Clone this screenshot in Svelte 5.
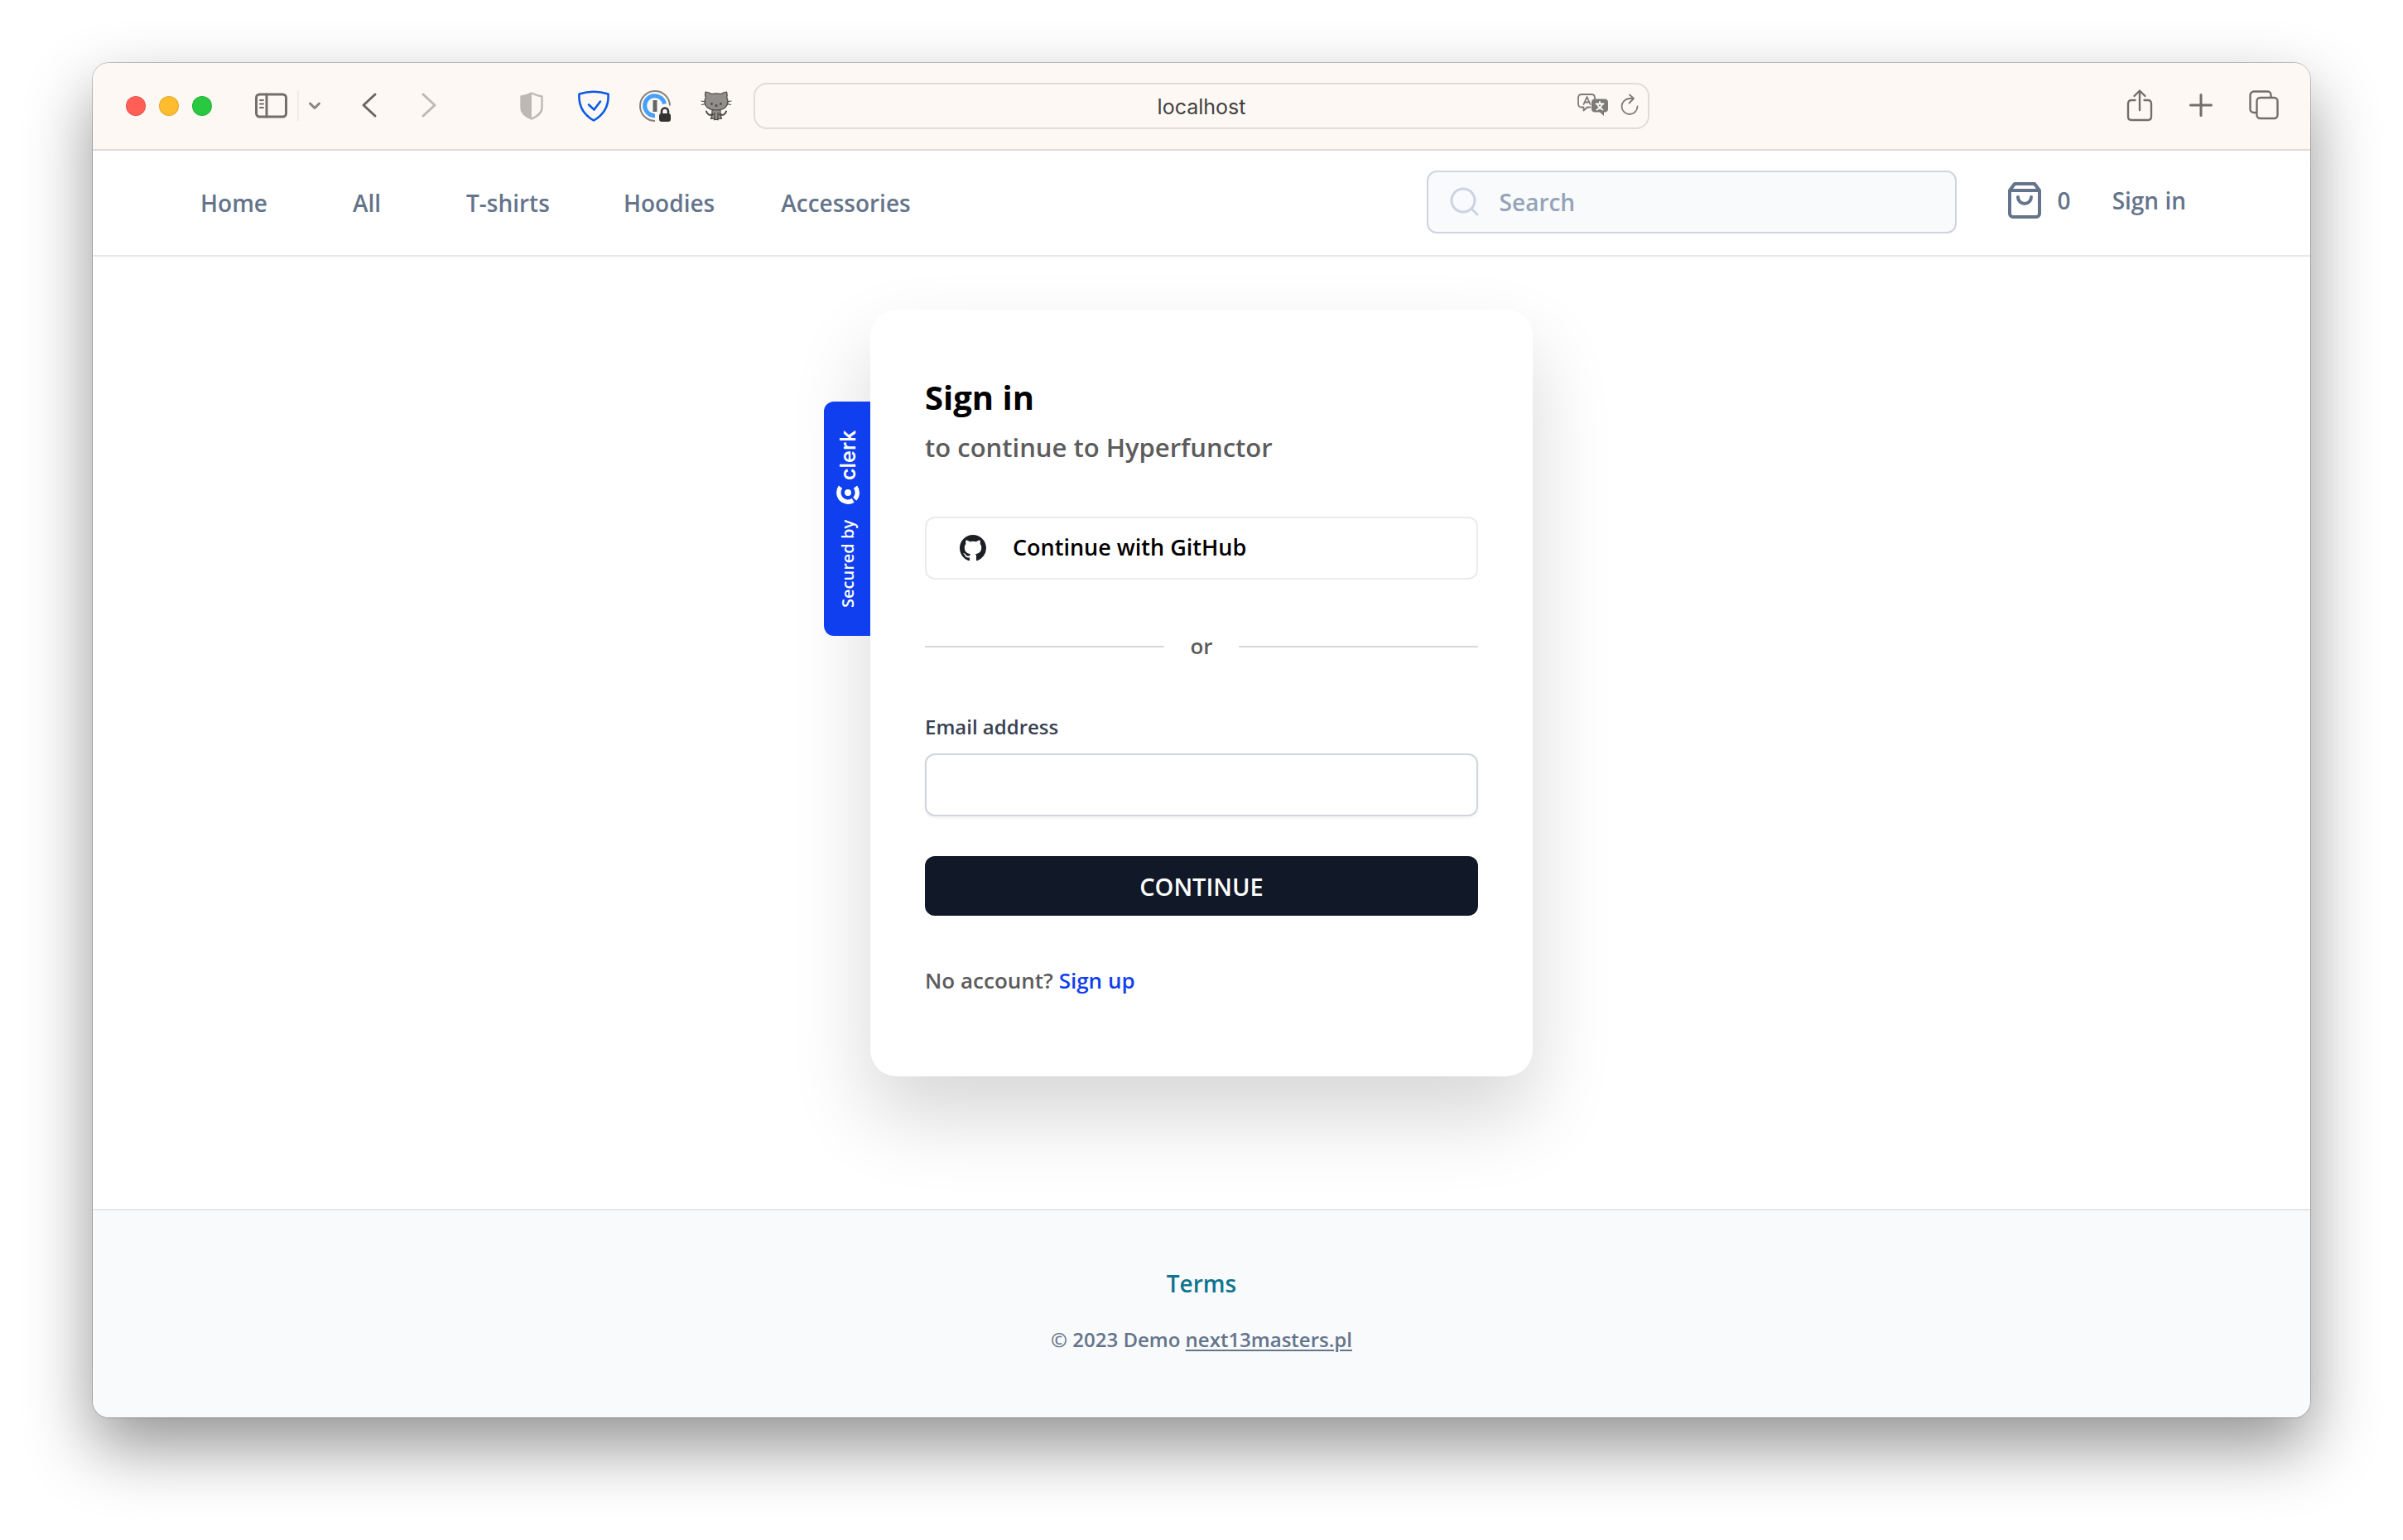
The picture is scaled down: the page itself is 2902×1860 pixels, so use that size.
<script>
  const navLinks = ['Home', 'All', 'T-shirts', 'Hoodies', 'Accessories'];
  let search = $state('');
  let email = $state('');
</script>

<div class="desktop">
  <div class="window">
    <div class="toolbar">
      <div class="tools left">
        <div class="lights">
          <button class="light red" aria-label="Close"></button>
          <button class="light yellow" aria-label="Minimise"></button>
          <button class="light green" aria-label="Zoom"></button>
        </div>
        <div class="sidebar-tools">
          <button class="icon" aria-label="Show sidebar">
            <svg width="40" height="32" viewBox="0 0 40 32" fill="none" stroke="#746e6a" stroke-width="3" stroke-linecap="round">
              <rect x="1.5" y="2" width="36" height="27" rx="4" />
              <path d="M14 2v27" />
              <path d="M6 9h4M6 13.500h4M6 18h4" stroke-width="2" />
            </svg>
          </button>
          <span class="divider"></span>
          <button class="icon" aria-label="Tab groups">
            <svg width="16" height="12" viewBox="0 0 16 12" fill="none" stroke="#8a8581" stroke-width="3" stroke-linecap="round" stroke-linejoin="round"><path d="M2.500 3 8 8.500 13.500 3" /></svg>
          </button>
        </div>
        <div class="history">
          <button class="icon" aria-label="Back">
            <svg width="20" height="32" viewBox="0 0 20 32" fill="none" stroke="#6b6561" stroke-width="3" stroke-linecap="round" stroke-linejoin="round"><path d="M17 3 3 16l14 13" /></svg>
          </button>
          <button class="icon" aria-label="Forward">
            <svg width="20" height="32" viewBox="0 0 20 32" fill="none" stroke="#bdb8b4" stroke-width="3" stroke-linecap="round" stroke-linejoin="round"><path d="m3 3 14 13L3 29" /></svg>
          </button>
        </div>
        <div class="extensions">
          <button class="icon privacy" aria-label="Privacy report">
            <svg width="28" height="34" viewBox="0 0 28 34"><path d="M14 1.500c4 2 8 3.200 12.500 4V19c0 7-6 10.500-12.500 13.500C7.500 29.500 1.500 26 1.500 19V5.500C6 4.700 10 3.500 14 1.500Z" fill="none" stroke="#bdb8b4" stroke-width="2.400" stroke-linejoin="round" /><path d="M14 1.500v31C7.500 29.500 1.500 26 1.500 19V5.500C6 4.700 10 3.500 14 1.500Z" fill="#bdb8b4" /></svg>
          </button>
          <button class="icon" aria-label="Ad blocker">
            <svg width="38" height="38" viewBox="0 0 38 38" fill="none" stroke="#0a5ae6" stroke-width="2.600" stroke-linecap="round" stroke-linejoin="round"><path d="M1.500 4.500C13 .8 25 .8 36.500 4.500 37.500 19 31 29.500 19 36.500 7 29.500.5 19 1.500 4.500Z" /><path d="m13 17.500 6.500 6L27 13.500" /></svg>
          </button>
          <button class="icon" aria-label="Password manager">
            <svg width="38" height="38" viewBox="0 0 38 38" fill="none"><path d="M37 18.500A18 18 0 1 0 19 37" stroke="#85817e" stroke-width="2" /><path d="M30.500 16.500A12 12 0 1 0 19 30.700" stroke="#46a0fb" stroke-width="5" /><path d="M16.500 12h5v14h-5z" fill="#666" /><rect x="24" y="28" width="14" height="10" rx="3" fill="#333" /><path d="M27 29v-3.500a4 4 0 0 1 8 0V29" stroke="#333" stroke-width="2.600" /></svg>
          </button>
          <button class="icon" aria-label="Octotree">
            <svg width="38" height="38" viewBox="0 0 38 38" fill="#918e8b" stroke="#4a4846" stroke-width="1.200" stroke-linejoin="round" stroke-linecap="round">
              <path d="M14 23.500c0 4 .5 7-1.500 11h3c1 0 1.500 1 3.500 1s2.500-1 3.500-1h3c-2-4-1.500-7-1.500-11Z" />
              <path d="M6 2c3 0 5.500 1 7 2.500 4-.8 8-.8 12 0C26.500 3 29 2 31.500 2c.8 2.500.8 5 .2 7C33.500 12 33.500 15 32 18c-2 4-6.500 6-13 6S8 22 6 18c-1.500-3-1.500-6 .3-9C5.500 7 5.300 4.500 6 2Z" />
              <path d="M15 29c-4 2-7 0-8-3.500M23 29c4 2 7 0 8-3.500" fill="none" stroke-width="2" />
              <path d="M17 27v9M21 27v9M1 13l5 1M1.500 17.500l4.500-1M37 13l-5 1M36.500 17.500l-4.500-1" fill="none" />
              <circle cx="13.500" cy="16.500" r=".8" /><circle cx="24.500" cy="16.500" r=".8" /><circle cx="19" cy="18.500" r="1" fill="none" />
            </svg>
          </button>
        </div>
      </div>

      <div class="address">
        <span class="host">localhost</span>
        <div class="address-tools">
          <button class="icon" aria-label="Translate">
            <svg width="38" height="28" viewBox="0 0 38 28" fill="none" stroke="#7d7a77" stroke-width="1.800" stroke-linejoin="round" stroke-linecap="round">
              <path d="M15.500 16.500H12l-4.500 4v-4H5c-2.500 0-4-1.500-4-4V5c0-2.500 1.500-4 4-4h12c2.500 0 4 1.500 4 4v1" />
              <path d="M7.500 13 11.500 4l4 9M9 10.500h5" />
              <path d="M21 6.500h12c2.500 0 4 1.500 4 4v8c0 2.500-1.500 4-4 4h-1V27l-5-4.500h-6c-2.500 0-4-1.500-4-4v-8c0-2.500 1.500-4 4-4Z" fill="#7d7a77" stroke="none" />
              <path d="M22.500 12.500h9M27 10v2.500M30 12.500c-1 3.500-3.500 5.500-6.500 7M24 12.500c1 3.500 3.500 5.500 6.500 7" stroke="#fff" />
            </svg>
          </button>
          <button class="icon" aria-label="Reload">
            <svg width="22" height="28" viewBox="0 0 22 28" fill="none" stroke="#7d7a77" stroke-width="1.800" stroke-linecap="round" stroke-linejoin="round"><path d="M20.500 15.500A9.500 9.500 0 1 1 11 6h5M11 1.500l5 4.500-5.500 5.500" /></svg>
          </button>
        </div>
      </div>

      <div class="tools right">
        <button class="icon" aria-label="Share">
          <svg width="32" height="40" viewBox="0 0 32 40" fill="none" stroke="#746e6a" stroke-width="2.400" stroke-linecap="round" stroke-linejoin="round"><path d="M10.500 14H6c-2.500 0-4 1.500-4 4v16c0 2.500 1.500 4 4 4h20c2.500 0 4-1.500 4-4V18c0-2.500-1.500-4-4-4h-4.500M16 26V3M9.500 9 16 2.500 22.500 9" /></svg>
        </button>
        <button class="icon" aria-label="New tab">
          <svg width="28" height="28" viewBox="0 0 28 28" fill="none" stroke="#746e6a" stroke-width="3" stroke-linecap="round"><path d="M14 1.500v25M1.500 14h25" /></svg>
        </button>
        <button class="icon" aria-label="Tab overview">
          <svg width="36" height="36" viewBox="0 0 36 36" fill="none" stroke="#746e6a" stroke-width="2.400" stroke-linejoin="round"><rect x="9.500" y="9" width="25" height="25" rx="4" /><path d="M9.500 27H6c-2.500 0-4.500-1.500-4.500-4V6c0-2.500 2-4.500 4.500-4.500h16.500c2.500 0 4 2 4 4.500v3" /></svg>
        </button>
      </div>
    </div>

    <header class="site-header">
      <nav>
        {#each navLinks as link}
          <a href="#{link.toLowerCase()}">{link}</a>
        {/each}
      </nav>
      <div class="actions">
        <label class="search">
          <svg width="36" height="36" viewBox="0 0 36 36" fill="none" stroke="#cbd5e1" stroke-width="3" stroke-linecap="round"><circle cx="16" cy="16" r="14" /><path d="m26 26 7 7" /></svg>
          <input type="search" placeholder="Search" aria-label="Search" bind:value={search} />
        </label>
        <a class="cart" href="#cart" aria-label="Cart, 0 items">
          <svg width="48" height="48" viewBox="0 0 24 24" fill="none" stroke="#64748b" stroke-width="2" stroke-linecap="round" stroke-linejoin="round"><path d="M6 2 3 6v14a2 2 0 0 0 2 2h14a2 2 0 0 0 2-2V6l-3-4ZM3 6h18M16 10a4 4 0 0 1-8 0" /></svg>
          <span>0</span>
        </a>
        <a class="login" href="#signin">Sign in</a>
      </div>
    </header>

    <main>
      <section class="card">
        <a class="badge" href="#clerk">
          <span class="secured">Secured by</span>
          <svg width="28" height="24" viewBox="0 0 28 24" fill="none" stroke="#fff" stroke-width="5.400"><circle cx="14" cy="9" r="4" fill="#fff" stroke="none" /><path d="M5 2.200A11.300 11.300 0 0 0 20.200 18.400" /><path d="M23 2.200A11.300 11.300 0 0 1 22.200 16.800" /></svg>
          <span class="clerk">clerk</span>
        </a>
        <h1>Sign in</h1>
        <p class="subtitle">to continue to Hyperfunctor</p>
        <button class="github">
          <svg width="32" height="32" viewBox="0 0 16 16" fill="#1b1f24"><path d="M8 0C3.580 0 0 3.580 0 8c0 3.540 2.290 6.530 5.470 7.590.4.070.55-.17.55-.38 0-.19-.01-.82-.01-1.490-2.010.37-2.530-.49-2.690-.94-.09-.23-.48-.94-.82-1.130-.28-.15-.68-.52-.01-.53.63-.01 1.080.58 1.230.82.72 1.210 1.870.87 2.330.66.07-.52.28-.87.51-1.070-1.780-.2-3.640-.89-3.640-3.950 0-.87.31-1.590.82-2.150-.08-.2-.36-1.020.08-2.120 0 0 .67-.21 2.200.82.64-.18 1.320-.27 2-.27s1.360.09 2 .27c1.530-1.040 2.200-.82 2.200-.82.44 1.100.16 1.920.08 2.120.51.56.82 1.270.82 2.150 0 3.070-1.870 3.750-3.650 3.950.29.25.54.73.54 1.480 0 1.070-.01 1.930-.01 2.200 0 .21.15.46.55.38A8.010 8.010 0 0 0 16 8c0-4.420-3.580-8-8-8Z" /></svg>
          <span>Continue with GitHub</span>
        </button>
        <div class="or"><span>or</span></div>
        <form onsubmit={(e) => e.preventDefault()}>
          <label for="email">Email address</label>
          <input id="email" type="email" bind:value={email} />
          <button class="continue" type="submit">CONTINUE</button>
        </form>
        <p class="signup">No account? <a href="#signup">Sign up</a></p>
      </section>
    </main>

    <footer>
      <a class="terms" href="#terms">Terms</a>
      <p>© 2023 Demo <a href="#site">next13masters.pl</a></p>
    </footer>
  </div>
</div>

<style>
  :global(body) {
    margin: 0;
    background: #fff;
  }
  :global(*) {
    box-sizing: border-box;
  }
  .desktop {
    display: flex;
    min-height: 100vh;
    padding: 76px 112px 148px;
    font-family: 'Open Sans', 'Noto Sans', sans-serif;
    font-weight: 600;
  }
  .window {
    display: flex;
    flex: 1;
    flex-direction: column;
    overflow: hidden;
    border-radius: 20px;
    background: #fff;
    box-shadow: 0 0 0 1px rgb(0 0 0 / 22%), 0 36px 80px rgb(0 0 0 / 42%);
  }
  a {
    color: inherit;
    text-decoration: none;
  }
  button {
    padding: 0;
    border: 0;
    background: none;
    font: inherit;
    cursor: pointer;
  }
  svg {
    display: block;
    flex: none;
  }
  p,
  h1 {
    margin: 0;
  }

  .toolbar {
    display: grid;
    grid-template-columns: 1fr minmax(0, 1082px) 1fr;
    align-items: center;
    height: 106px;
    border-bottom: 2px solid #dedbd9;
    background: #fdf8f4;
  }
  .tools,
  .lights,
  .sidebar-tools,
  .history,
  .extensions,
  .address-tools {
    display: flex;
    align-items: center;
  }
  .left {
    padding: 0 26px 0 40px;
  }
  .lights {
    gap: 16px;
  }
  .light {
    width: 24px;
    height: 24px;
    border: 1px solid rgb(0 0 0 / 10%);
    border-radius: 50%;
  }
  .red {
    background: #ff5f57;
  }
  .yellow {
    background: #febc2e;
  }
  .green {
    background: #28c840;
  }
  .sidebar-tools {
    gap: 11px;
    margin-left: 52px;
  }
  .divider {
    width: 2px;
    height: 36px;
    background: #f0ebe7;
  }
  .history {
    gap: 52px;
    margin-left: 48px;
    padding-bottom: 2px;
  }
  .extensions {
    gap: 36px;
    margin-left: auto;
  }
  .privacy {
    margin-right: 6px;
  }
  .address {
    display: grid;
    grid-template-columns: 1fr auto 1fr;
    align-items: center;
    height: 56px;
    padding: 0 11px;
    border: 2px solid #e2dcd8;
    border-radius: 16px;
  }
  .host {
    grid-column: 2;
    padding-top: 2px;
    color: #444240;
    font: 400 25px/32px Inter, sans-serif;
  }
  .address-tools {
    gap: 14px;
    justify-self: end;
    padding-bottom: 2px;
  }
  .right {
    justify-content: flex-end;
    gap: 44px;
    padding: 0 38px 2px 0;
  }

  .site-header {
    display: flex;
    align-items: center;
    justify-content: space-between;
    height: 128px;
    padding: 0 150px 0 130px;
    border-bottom: 2px solid #e5e7eb;
    color: #64748b;
    font-size: 28px;
    line-height: 40px;
  }
  nav {
    display: flex;
    gap: 80px;
  }
  nav a {
    min-width: 80px;
    text-align: center;
  }
  nav a:nth-child(n + 3) {
    min-width: 110px;
    text-align: left;
  }
  .actions {
    display: flex;
    align-items: center;
    padding-bottom: 2px;
  }
  .search {
    display: flex;
    align-items: center;
    gap: 24px;
    width: 640px;
    height: 76px;
    padding: 0 26px;
    border: 2px solid #cfd4de;
    border-radius: 12px;
    background: #f8fafc;
  }
  .search input {
    flex: 1;
    min-width: 0;
    padding: 0;
    border: 0;
    outline: 0;
    background: none;
    color: #64748b;
    font: inherit;
  }
  .search input::placeholder {
    color: #94a3b8;
    opacity: 1;
  }
  .cart,
  .login {
    padding-bottom: 4px;
  }
  .cart {
    display: flex;
    align-items: center;
    gap: 16px;
    margin-left: 58px;
  }
  .login {
    margin-left: 50px;
  }

  main {
    display: flex;
    flex: 1;
    align-items: flex-start;
    justify-content: center;
    padding: 64px 32px 160px;
  }
  .card {
    position: relative;
    width: 800px;
    min-height: 926px;
    padding: 78px 66px 88px;
    border-radius: 32px;
    background: #fff;
    box-shadow: 0 48px 96px rgb(0 0 0 / 16%);
  }
  .badge {
    position: absolute;
    top: 111px;
    right: 100%;
    display: flex;
    align-items: center;
    width: 56px;
    height: 283px;
    padding: 34px 2px 34px 0;
    border-radius: 0 12px 12px 0;
    background: #103fef;
    color: #fff;
    white-space: nowrap;
    writing-mode: vertical-rl;
    rotate: 180deg;
  }
  .secured {
    font-size: 20px;
    line-height: 56px;
  }
  .badge svg {
    margin: 18px 0 6px;
    rotate: 180deg;
  }
  .clerk {
    font: 600 25px/56px Inter, sans-serif;
  }
  h1 {
    font-size: 40px;
    font-weight: 700;
    line-height: 56px;
  }
  .subtitle {
    margin-top: 8px;
    color: #5c5c5c;
    font-size: 31px;
    line-height: 48px;
  }
  .github {
    display: flex;
    align-items: center;
    gap: 32px;
    width: 100%;
    height: 76px;
    margin-top: 60px;
    padding: 0 40px;
    border: 2px solid #ebebeb;
    border-radius: 12px;
    font-size: 27px;
  }
  .github span {
    padding-bottom: 3px;
  }
  .or {
    display: flex;
    align-items: center;
    gap: 31px;
    margin-top: 60px;
    color: #5c5c5c;
    font-size: 26px;
    line-height: 40px;
  }
  .or span {
    padding-bottom: 2px;
  }
  .or::before,
  .or::after {
    content: '';
    flex: 1;
    height: 2px;
    background: #d8d8d8;
  }
  form {
    display: flex;
    flex-direction: column;
    margin-top: 56px;
  }
  form label {
    color: #374151;
    font-size: 24px;
    line-height: 40px;
  }
  form input {
    height: 76px;
    margin-top: 12px;
    padding: 0 24px;
    border: 2px solid #d1d5db;
    border-radius: 12px;
    outline: 0;
    background: #fff;
    box-shadow: 0 2px 4px rgb(0 0 0 / 5%);
    font: inherit;
    font-size: 28px;
  }
  .continue {
    height: 72px;
    margin-top: 48px;
    border-radius: 12px;
    background: #111827;
    color: #fff;
    font-size: 29px;
  }
  .signup {
    margin-top: 58px;
    color: #5c5c5c;
    font-size: 26px;
    line-height: 40px;
  }
  .signup a {
    color: #103fef;
  }

  footer {
    display: flex;
    flex-direction: column;
    align-items: center;
    gap: 28px;
    height: 252px;
    padding: 68px 32px;
    border-top: 2px solid #e5e7eb;
    background: #f8fafc;
    color: #64748b;
    font-size: 24px;
    line-height: 40px;
  }
  .terms {
    color: #0e7490;
    font-size: 28px;
  }
  footer p a {
    text-decoration: underline;
    text-underline-offset: 3px;
  }
</style>
